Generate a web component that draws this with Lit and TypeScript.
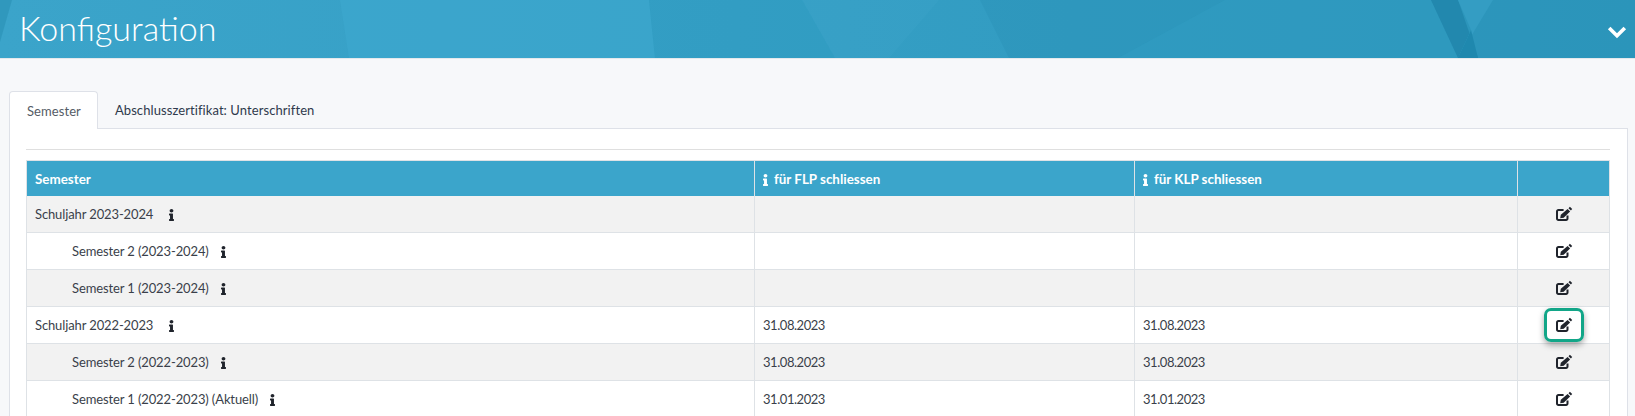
import { LitElement, html, css, svg } from "lit";
import { customElement } from "lit/decorators.js";

const infoIcon = html`<svg class="info" viewBox="0 0 192 512" preserveAspectRatio="none"><path fill="currentColor" d="M20 424.229h20V279.771H20c-11.046 0-20-8.954-20-20V212c0-11.046 8.954-20 20-20h112c11.046 0 20 8.954 20 20v212.229h20c11.046 0 20 8.954 20 20V492c0 11.046-8.954 20-20 20H20c-11.046 0-20-8.954-20-20v-47.771c0-11.046 8.954-20 20-20zM96 0C56.235 0 24 32.235 24 72s32.235 72 72 72 72-32.235 72-72S135.764 0 96 0z"/></svg>`;

const editIcon = html`<svg class="edit" viewBox="0 0 16 14"><path fill="none" stroke="currentColor" stroke-width="2" d="M7.6 3H2.4A1.4 1.4 0 0 0 1 4.4v7.2A1.4 1.4 0 0 0 2.4 13h7.7a1.4 1.4 0 0 0 1.4-1.4V8.4"/><path fill="currentColor" d="M13.9-.2l2.3 2.3-1.3 1.4-2.4-2.3zM11.6 2l2.5 2.4-6.4 6.4-3.5.5.6-3.6z"/></svg>`;

const rows = [
  { name: "Schuljahr 2023-2024", sub: false, a: "", b: "" },
  { name: "Semester 2 (2023-2024)", sub: true, a: "", b: "" },
  { name: "Semester 1 (2023-2024)", sub: true, a: "", b: "" },
  { name: "Schuljahr 2022-2023", sub: false, a: "31.08.2023", b: "31.08.2023", focus: true },
  { name: "Semester 2 (2022-2023)", sub: true, a: "31.08.2023", b: "31.08.2023" },
  { name: "Semester 1 (2022-2023) (Aktuell)", sub: true, a: "31.01.2023", b: "31.01.2023" },
];

@customElement("app-root")
export class AppRoot extends LitElement {
  static styles = css`
    :host {
      display: block;
      height: 416px;
      overflow: hidden;
      background: #f7f8fa;
      font-family: "Lato", "Open Sans", sans-serif;
      font-size: 13px;
      color: #3a3f4a;
    }
    .banner {
      position: relative;
      height: 58px;
      background: linear-gradient(90deg, #3ba4ca 0%, #359fc5 45%, #2d97bc 100%);
      border-bottom: 1px solid #e4e8ec;
      display: flex;
      align-items: center;
      justify-content: space-between;
      padding: 0 8px 0 19px;
      overflow: hidden;
    }
    .shapes {
      position: absolute;
      inset: 0;
      width: 100%;
      height: 100%;
    }
    h1 {
      position: relative;
      margin: -2px 0 0;
      font-weight: 300;
      font-size: 34px;
      line-height: 58px;
      color: #fff;
    }
    .chev {
      position: relative;
      width: 20px;
      height: 14px;
      margin-top: 6px;
    }
    main {
      padding: 32px 7px 0 9px;
    }
    .tabs {
      display: flex;
      height: 38px;
      position: relative;
      z-index: 1;
      letter-spacing: 0.08px;
    }
    .tab {
      display: flex;
      align-items: center;
      padding: 0 17px;
      color: #2f3a4c;
    }
    .tab.active {
      background: #fff;
      border: 1px solid #dee1e8;
      border-bottom: 0;
      border-radius: 4px 4px 0 0;
      color: #555c66;
      padding: 0 16px 0 17px;
    }
    .panel {
      margin-top: -1px;
      background: #fff;
      border: 1px solid #dee1e8;
      padding: 20px 17px 0 16px;
      height: 300px;
    }
    hr {
      margin: 0 0 10px;
      border: 0;
      border-top: 1px solid #dfdfdf;
    }
    table {
      width: 100%;
      table-layout: fixed;
      border-collapse: collapse;
      border: 1px solid #dee2e6;
      border-bottom: 0;
    }
    col.c1 { width: 728px; }
    col.c2 { width: 380px; }
    col.c3 { width: 383px; }
    th {
      height: 35px;
      padding: 0 8px;
      background: #3ba5cb;
      color: #fff;
      font-weight: 700;
      font-size: 13.4px;
      text-align: left;
      border-left: 1px solid #dee2e6;
    }
    th .info {
      margin-right: 6px;
      color: #fff;
    }
    td {
      height: 36px;
      padding: 0 8px;
      border-left: 1px solid #dee2e6;
      border-bottom: 1px solid #dee2e6;
    }
    tr:nth-child(odd) td {
      background: #f2f2f2;
    }
    .date {
      letter-spacing: -0.45px;
    }
    .name {
      letter-spacing: -0.12px;
    }
    .name .info {
      margin-left: 16px;
    }
    .sub {
      padding-left: 45px;
    }
    .sub .info {
      margin-left: 12px;
    }
    .info {
      width: 5px;
      height: 12px;
      vertical-align: -2px;
      color: #20242c;
    }
    .action {
      text-align: center;
    }
    .btn {
      display: inline-flex;
      align-items: center;
      justify-content: center;
      width: 40px;
      height: 34px;
      vertical-align: middle;
      border: 3px solid transparent;
      border-radius: 7px;
      color: #20242c;
      box-sizing: border-box;
    }
    .btn.focus {
      border-color: #12a688;
      box-shadow: 0 3px 6px rgba(0, 0, 0, 0.35);
    }
    .edit {
      width: 16px;
      height: 14px;
      overflow: visible;
    }
  `;

  render() {
    return html`
      <div class="banner">
        <svg class="shapes" viewBox="0 0 1635 58" preserveAspectRatio="none">
          ${svg`
            <polygon points="0,0 12,0 0,42" fill="#2c93b8" opacity=".7"/>
            <polygon points="340,0 649,0 655,58 349,58" fill="#3ea9cf" opacity=".6"/>
            <polygon points="649,0 802,0 835,58 655,58" fill="#2f9bc1" opacity=".35"/>
            <polygon points="802,0 939,0 889,58 835,58" fill="#3ea4ca" opacity=".3"/>
            <polygon points="980,0 1635,0 1635,58 1009,58" fill="#2a93b9" opacity=".45"/>
            <polygon points="1225,0 1431,0 1458,58 1118,58" fill="#34a0c6" opacity=".35"/>
            <polygon points="1431,0 1458,0 1478,58 1458,58" fill="#2288ae"/>
            <polygon points="1458,0 1493,0 1458,58 1471,30" fill="#349dc3"/>
            <polygon points="1471,30 1458,58 1478,58" fill="#1f88ae"/>
          `}
        </svg>
        <h1>Konfiguration</h1>
        <svg class="chev" viewBox="0 0 20 14"><path d="M2.2 3l7.8 7.8L17.8 3" fill="none" stroke="#fff" stroke-width="3.6"/></svg>
      </div>
      <main>
        <div class="tabs">
          <div class="tab active">Semester</div>
          <div class="tab">Abschlusszertifikat: Unterschriften</div>
        </div>
        <div class="panel">
          <hr />
          <table>
            <colgroup>
              <col class="c1" /><col class="c2" /><col class="c3" /><col />
            </colgroup>
            <thead>
              <tr>
                <th>Semester</th>
                <th>${infoIcon}für FLP schliessen</th>
                <th>${infoIcon}für KLP schliessen</th>
                <th></th>
              </tr>
            </thead>
            <tbody>
              ${rows.map(
                (r) => html`<tr>
                  <td class="name ${r.sub ? "sub" : ""}">${r.name}${infoIcon}</td>
                  <td class="date">${r.a}</td>
                  <td class="date">${r.b}</td>
                  <td class="action"><span class="btn ${r.focus ? "focus" : ""}">${editIcon}</span></td>
                </tr>`
              )}
            </tbody>
          </table>
        </div>
      </main>
    `;
  }
}
